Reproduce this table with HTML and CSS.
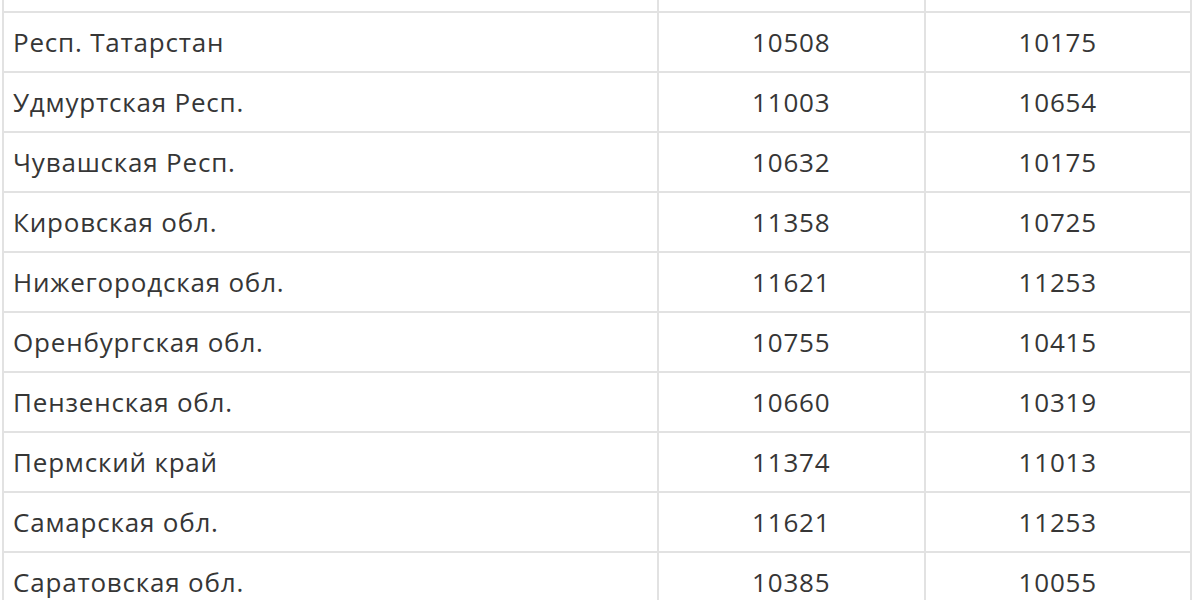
FILE: index.html
```html
<!DOCTYPE html>
<html lang="ru">
<head>
<meta charset="utf-8">
<link rel="stylesheet" href="styles.css">
</head>
<body>
<table class="grid">
  <tbody>
    <tr><td class="name">&nbsp;</td><td class="num"></td><td class="num"></td></tr>
    <tr><td class="name">Респ. Татарстан</td><td class="num">10508</td><td class="num">10175</td></tr>
    <tr><td class="name">Удмуртская Респ.</td><td class="num">11003</td><td class="num">10654</td></tr>
    <tr><td class="name">Чувашская Респ.</td><td class="num">10632</td><td class="num">10175</td></tr>
    <tr><td class="name">Кировская обл.</td><td class="num">11358</td><td class="num">10725</td></tr>
    <tr><td class="name">Нижегородская обл.</td><td class="num">11621</td><td class="num">11253</td></tr>
    <tr><td class="name">Оренбургская обл.</td><td class="num">10755</td><td class="num">10415</td></tr>
    <tr><td class="name">Пензенская обл.</td><td class="num">10660</td><td class="num">10319</td></tr>
    <tr><td class="name">Пермский край</td><td class="num">11374</td><td class="num">11013</td></tr>
    <tr><td class="name">Самарская обл.</td><td class="num">11621</td><td class="num">11253</td></tr>
    <tr><td class="name">Саратовская обл.</td><td class="num">10385</td><td class="num">10055</td></tr>
  </tbody>
</table>
</body>
</html>
```
FILE: styles.css
```css
html, body {
  margin: 0;
  padding: 0;
  background: #fff;
}
body {
  font-family: "Open Sans", "DejaVu Sans", sans-serif;
  color: #363636;
  overflow: hidden;
}
.grid {
  border-collapse: collapse;
  margin: -49px 0 0 2px;
  width: 1190px;
  table-layout: fixed;
  font-size: 26px;
  letter-spacing: 0.8px;
}
.grid td {
  border: 2px solid #e2e2e2;
  height: 60px;
  padding: 0 9px;
  vertical-align: middle;
  box-sizing: border-box;
}
.grid td.name {
  width: 655px;
  text-align: left;
}
.grid td.num {
  text-align: center;
}
```
